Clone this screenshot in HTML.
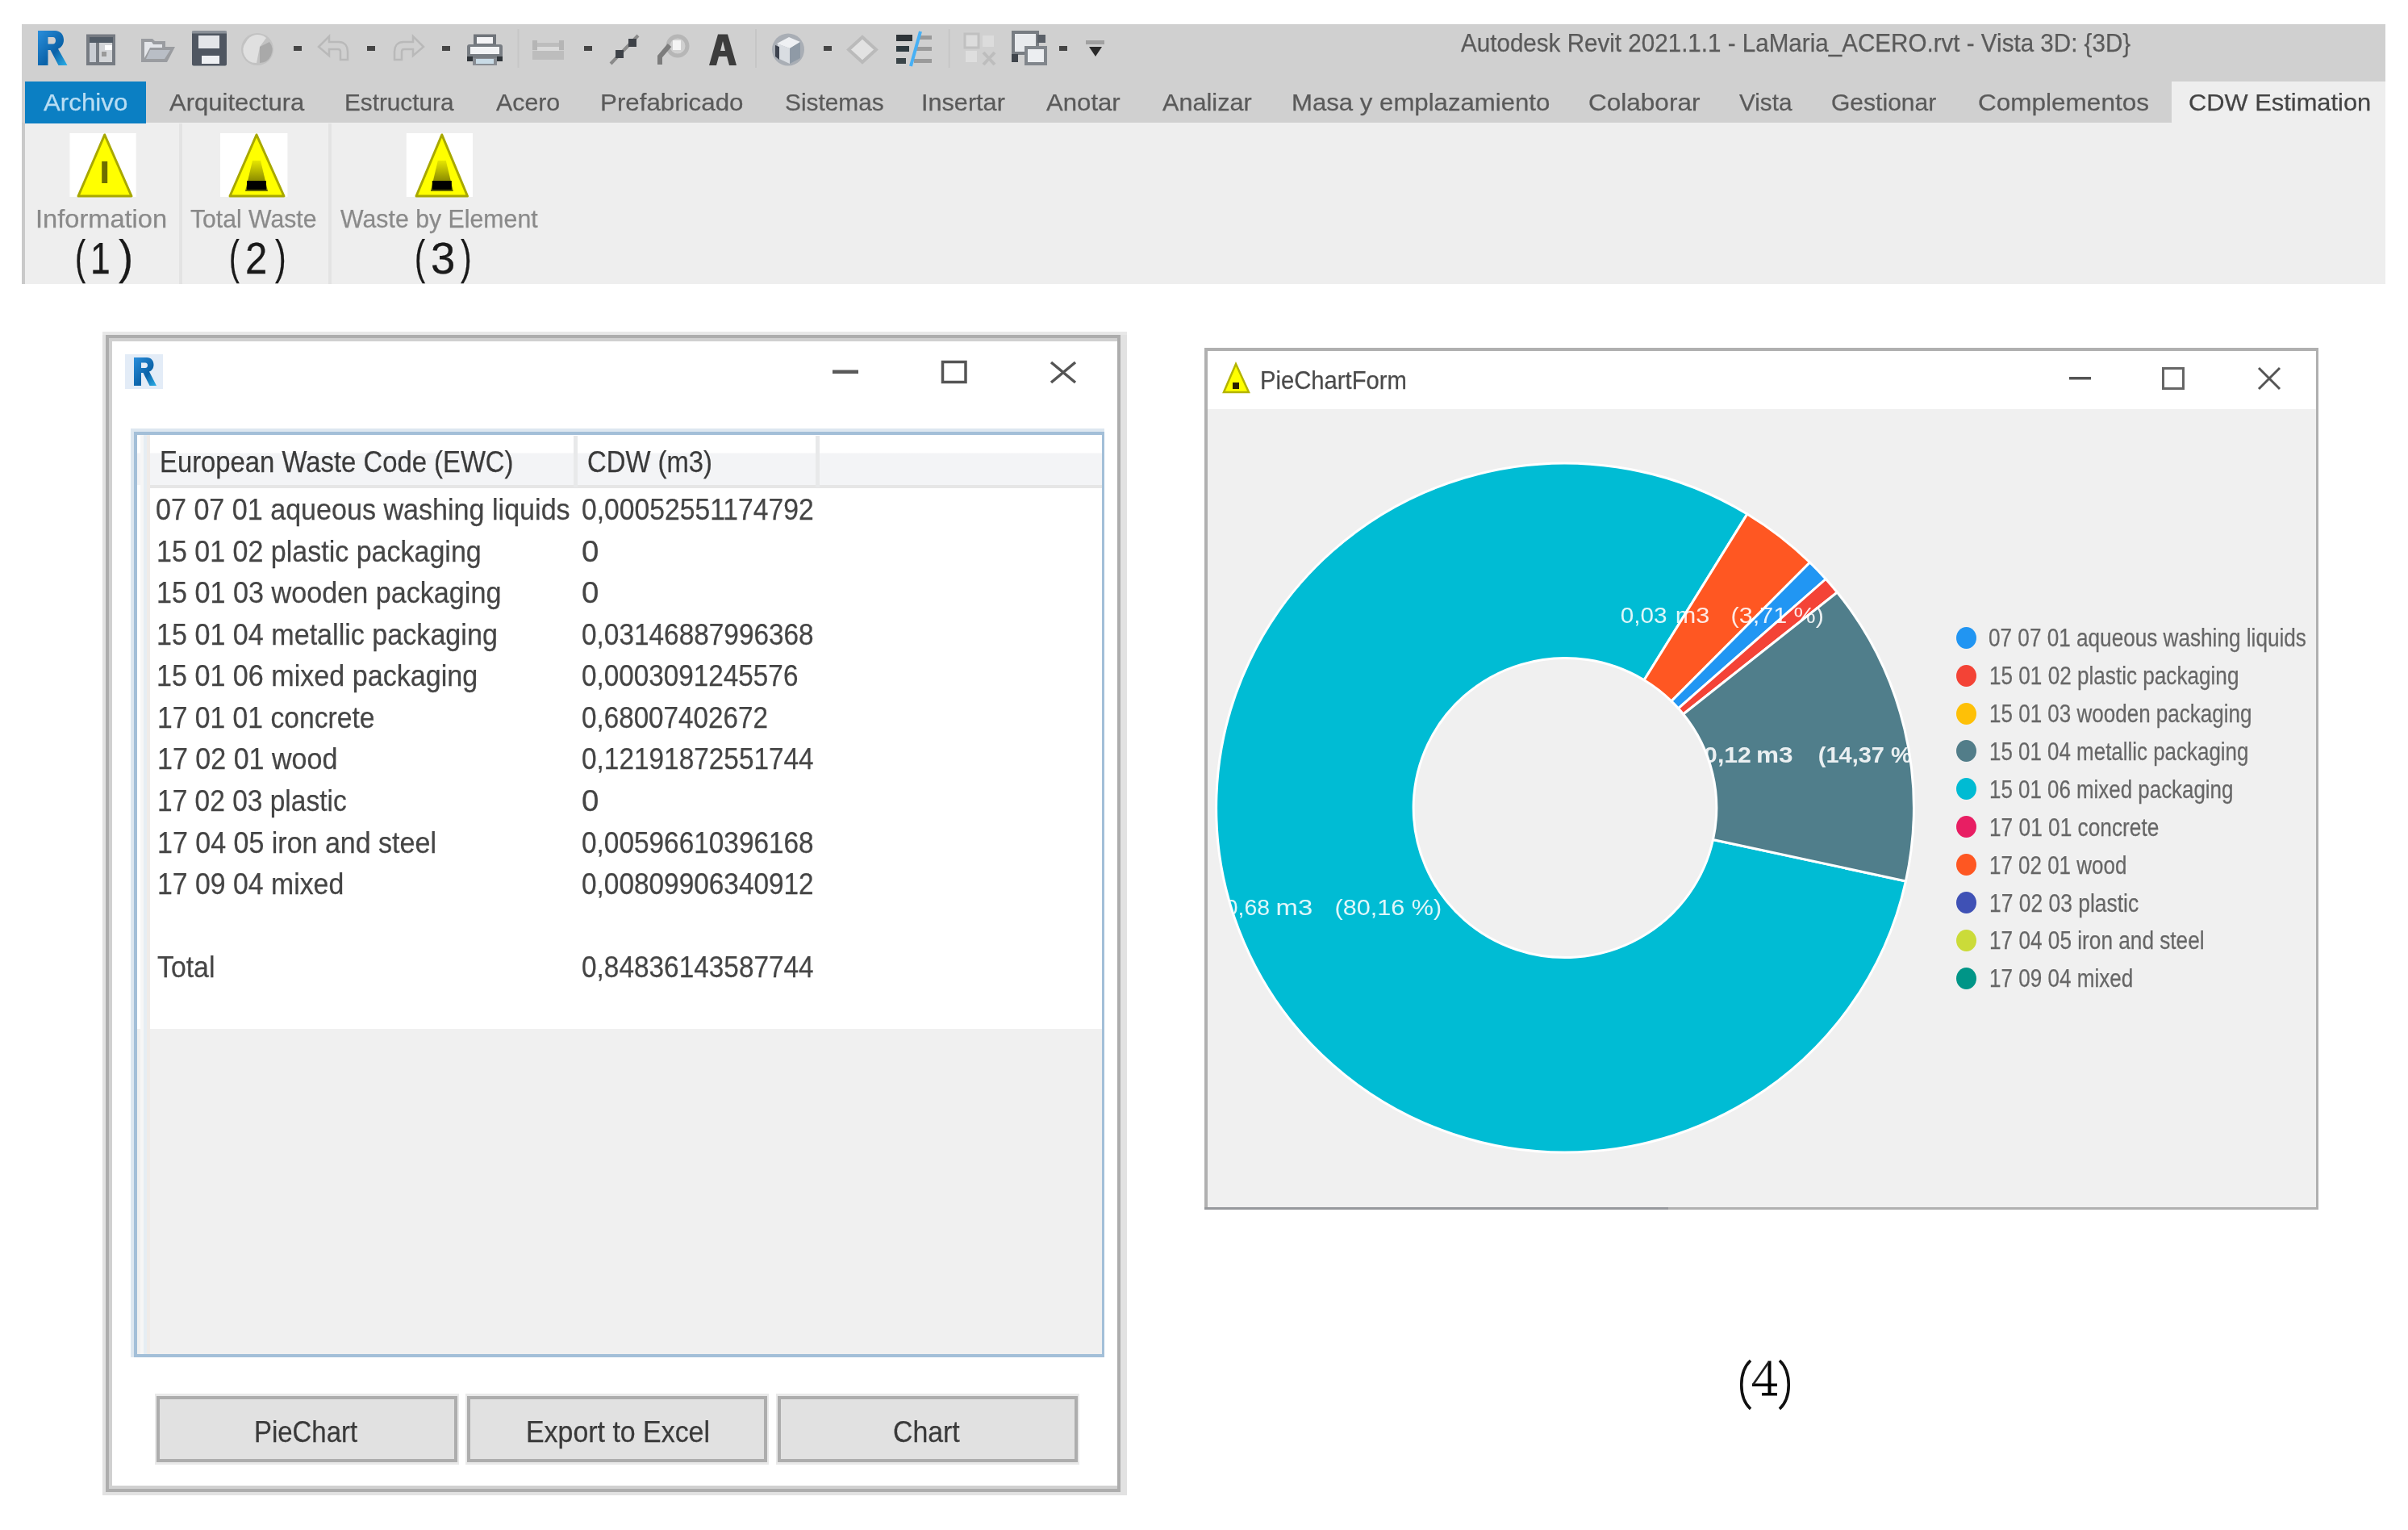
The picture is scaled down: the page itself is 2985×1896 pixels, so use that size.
<!DOCTYPE html>
<html><head><meta charset="utf-8"><style>
html,body{margin:0;padding:0;}
body{width:2985px;height:1896px;position:relative;overflow:hidden;background:#ffffff;font-family:'Liberation Sans',sans-serif;}
.t{position:absolute;white-space:nowrap;line-height:1;transform-origin:0 0;-webkit-text-stroke:0.25px currentColor;}
#wrap{position:absolute;left:0;top:0;width:2985px;height:1896px;filter:blur(0.7px);}
</style></head><body><div id="wrap">
<div style="position:absolute;left:27px;top:30px;width:2930px;height:122px;background:#d0d0d0"></div>
<div style="position:absolute;left:27px;top:152px;width:2930px;height:200px;background:#eeeeee"></div>
<div style="position:absolute;left:2692px;top:101px;width:265px;height:51px;background:#eeeeee"></div>
<div style="position:absolute;left:27px;top:152px;width:4px;height:200px;background:#c9c9c9"></div>
<div style="position:absolute;left:31.4px;top:101.4px;width:149.9px;height:51.19999999999999px;background:#0b7fc3"></div>
<div style="position:absolute;left:222px;top:153px;width:4px;height:198.5px;background:#e3e3e3"></div>
<div style="position:absolute;left:407px;top:153px;width:4px;height:198.5px;background:#e3e3e3"></div>
<div style="position:absolute;left:127px;top:411px;width:1270px;height:1442px;background:#e2e2e2"></div>
<div style="position:absolute;left:127px;top:411px;width:1270px;height:4px;background:#e8e8e8"></div>
<div style="position:absolute;left:131px;top:415px;width:1258px;height:1434px;background:#adadad"></div>
<div style="position:absolute;left:135px;top:419px;width:1250px;height:1426px;background:#d0d0d0"></div>
<div style="position:absolute;left:138.5px;top:423px;width:1246.5px;height:1418px;background:#ffffff"></div>
<div style="position:absolute;left:162px;top:531px;width:1207px;height:1150.5px;background:#dde7f0"></div>
<div style="position:absolute;left:166px;top:535px;width:1203px;height:1146.5px;background:#a3bfd8"></div>
<div style="position:absolute;left:169.5px;top:538.5px;width:1196.2px;height:1139.7px;background:#f0f0f0"></div>
<div style="position:absolute;left:169.5px;top:538.5px;width:1196.2px;height:736.5px;background:#ffffff"></div>
<div style="position:absolute;left:169.5px;top:538.5px;width:1196.2px;height:62.5px;background:linear-gradient(#ffffff 0,#ffffff 22px,#f3f4f6 23px,#f3f4f6 100%)"></div>
<div style="position:absolute;left:186px;top:601px;width:1179.7px;height:4px;background:#e6e6e6"></div>
<div style="position:absolute;left:711px;top:540px;width:5px;height:64px;background:#e8e9ea"></div>
<div style="position:absolute;left:1011px;top:540px;width:5px;height:64px;background:#e8e9ea"></div>
<div style="position:absolute;left:174px;top:538.5px;width:4px;height:1139.7px;background:#f6f6f6"></div>
<div style="position:absolute;left:178px;top:538.5px;width:4px;height:1139.7px;background:#e6edf3"></div>
<div style="position:absolute;left:182px;top:538.5px;width:4px;height:1139.7px;background:#efebe8"></div>
<div style="position:absolute;left:192px;top:1727px;width:377px;height:88px;background:#e9e9e9"></div>
<div style="position:absolute;left:194px;top:1730px;width:373px;height:82px;background:#adadad"></div>
<div style="position:absolute;left:198px;top:1734px;width:365px;height:74px;background:#e1e1e1"></div>
<div style="position:absolute;left:577px;top:1727px;width:376px;height:88px;background:#e9e9e9"></div>
<div style="position:absolute;left:579px;top:1730px;width:372px;height:82px;background:#adadad"></div>
<div style="position:absolute;left:583px;top:1734px;width:364px;height:74px;background:#e1e1e1"></div>
<div style="position:absolute;left:962px;top:1727px;width:376px;height:88px;background:#e9e9e9"></div>
<div style="position:absolute;left:964px;top:1730px;width:372px;height:82px;background:#adadad"></div>
<div style="position:absolute;left:968px;top:1734px;width:364px;height:74px;background:#e1e1e1"></div>
<div style="position:absolute;left:1493px;top:431px;width:1381px;height:1068px;background:#b0b0b0"></div>
<div style="position:absolute;left:1493px;top:1495.5px;width:575px;height:3.5px;background:#96989c"></div>
<div style="position:absolute;left:1496.5px;top:435px;width:1374.0px;height:1060.5px;background:#f0f0f0"></div>
<div style="position:absolute;left:1496.5px;top:435px;width:1374.0px;height:71.5px;background:#ffffff"></div>
<div style="position:absolute;left:2425.2px;top:776.7px;width:25px;height:27px;border-radius:50%;background:#2195f2"></div>
<div style="position:absolute;left:2425.2px;top:823.6px;width:25px;height:27px;border-radius:50%;background:#f34336"></div>
<div style="position:absolute;left:2425.2px;top:870.5px;width:25px;height:27px;border-radius:50%;background:#fec007"></div>
<div style="position:absolute;left:2425.2px;top:917.4000000000001px;width:25px;height:27px;border-radius:50%;background:#527d89"></div>
<div style="position:absolute;left:2425.2px;top:964.3000000000001px;width:25px;height:27px;border-radius:50%;background:#00bbd3"></div>
<div style="position:absolute;left:2425.2px;top:1011.2px;width:25px;height:27px;border-radius:50%;background:#e81e63"></div>
<div style="position:absolute;left:2425.2px;top:1058.1px;width:25px;height:27px;border-radius:50%;background:#fe5722"></div>
<div style="position:absolute;left:2425.2px;top:1105.0px;width:25px;height:27px;border-radius:50%;background:#3f51b5"></div>
<div style="position:absolute;left:2425.2px;top:1151.9px;width:25px;height:27px;border-radius:50%;background:#cbdb39"></div>
<div style="position:absolute;left:2425.2px;top:1198.8px;width:25px;height:27px;border-radius:50%;background:#009587"></div>
<svg style="position:absolute;left:0;top:0" width="2985" height="1896" viewBox="0 0 2985 1896">
<defs>
<linearGradient id="rg" x1="0" y1="0" x2="1" y2="1"><stop offset="0" stop-color="#2a8fdc"/><stop offset="0.6" stop-color="#0a62a8"/><stop offset="1" stop-color="#2cb0e8"/></linearGradient>
<linearGradient id="wg" x1="0" y1="0" x2="0" y2="1"><stop offset="0" stop-color="#e6e600"/><stop offset="1" stop-color="#5e5e00"/></linearGradient>
<clipPath id="ring"><path clip-rule="evenodd" d="M1940,1001 m-426,0 a426,426 0 1 0 852,0 a426,426 0 1 0 -852,0 Z M1940,1001 m-186.5,0 a186.5,186.5 0 1 0 373.0,0 a186.5,186.5 0 1 0 -373.0,0 Z"/></clipPath>
</defs>
<path fill-rule="evenodd" d="M47,38 H68 C75,38 79,43 79,49.5 C79,55 76,59 72,60.5 L83.5,81 H72.5 L62.5,62 H59.5 V81 H47 Z M59.5,46 V54.5 H65.5 C68,54.5 69,52.5 69,50.25 C69,48 68,46 65.5,46 Z" fill="url(#rg)"/>
<rect x="107" y="42.5" width="36" height="38.5" fill="#767b82"/><rect x="111" y="46" width="29" height="7" fill="#535d68"/><rect x="111" y="53" width="8" height="24" fill="#c9cdd3"/><rect x="123" y="53" width="16" height="24" fill="#d3d5d8"/><rect x="130" y="56" width="9" height="6" fill="#ffffff"/><rect x="126" y="64" width="6" height="6" fill="#9a9a9a"/>
<path d="M175,48 H189 L192,51 H205 V58 H217 L207,77 H175 Z" fill="#9a9ca0"/><path d="M179,52 H188 L190,55 H201 V59 H186 L179,72 Z" fill="#e4e6ea"/><path d="M186,62 H211 L204,73 H181 Z" fill="#b9bec6"/>
<rect x="238" y="38.5" width="43" height="43" rx="2" fill="#4f5661"/><rect x="246" y="44" width="26" height="16" fill="#e3e5e9"/><rect x="250" y="69" width="22" height="10" fill="#eef0f3"/><rect x="238" y="38.5" width="43" height="3" fill="#8a9098"/>
<circle cx="319" cy="61" r="20" fill="#c2c2c2"/><path d="M305,52 A16,16 0 0 1 330,47 L322,58 L318,78 A16,16 0 0 1 305,52 Z" fill="#e0e0e0"/><path d="M322,58 L334,52 A16,16 0 0 1 322,78 Z" fill="#a9a9a9"/>
<rect x="364" y="57" width="10" height="6" fill="#454545"/>
<rect x="455" y="57" width="10" height="6" fill="#454545"/>
<rect x="548" y="57" width="10" height="6" fill="#454545"/>
<rect x="724" y="57" width="10" height="6" fill="#454545"/>
<rect x="1021" y="57" width="10" height="6" fill="#454545"/>
<rect x="1313" y="57" width="10" height="6" fill="#454545"/>
<path d="M395,58 L408,45 V52 H420 C428,52 431,58 431,64 V74 H422 V64 C422,62 421,61 419,61 H408 V69 Z" fill="#d0d0d0" stroke="#b9b9b9" stroke-width="2.5"/>
<path d="M525,58 L512,45 V52 H500 C492,52 489,58 489,64 V74 H498 V64 C498,62 499,61 501,61 H512 V69 Z" fill="#d0d0d0" stroke="#b9b9b9" stroke-width="2.5"/>
<rect x="587" y="42.5" width="28" height="14" fill="#70757b"/><rect x="591" y="46" width="20" height="8" fill="#f4f4f6"/><rect x="579" y="55" width="44" height="19" rx="3" fill="#787d83"/><rect x="583" y="58" width="36" height="9" fill="#f2f3f5"/><rect x="579" y="70" width="7" height="6" fill="#30353a"/><rect x="616" y="70" width="7" height="6" fill="#30353a"/><rect x="586" y="72" width="30" height="9" fill="#888c92"/><rect x="590" y="73" width="22" height="6" fill="#c9dbe6"/>
<rect x="641.5" y="36" width="2" height="48" fill="#c6c6c6"/>
<rect x="936" y="36" width="2" height="48" fill="#c6c6c6"/>
<rect x="1175.7" y="36" width="2" height="48" fill="#c6c6c6"/>
<rect x="660" y="63" width="39" height="11" fill="#bdbdbd"/><rect x="665" y="53" width="29" height="5" fill="#bdbdbd"/><rect x="660" y="50" width="6" height="12" fill="#b5b5b5"/><rect x="693" y="50" width="6" height="12" fill="#b5b5b5"/><rect x="666" y="58" width="27" height="5" fill="#dadada"/>
<path d="M757,79 L791,44" stroke="#8a8a8a" stroke-width="4"/><rect x="763" y="62" width="10" height="10" fill="#3e4248"/><rect x="779" y="48" width="10" height="10" fill="#3e4248"/>
<circle cx="840" cy="57" r="12" fill="none" stroke="#b6b6b6" stroke-width="5"/><rect x="834" y="50" width="10" height="12" fill="#f4f4f4"/><path d="M818,80 V70 L830,56" stroke="#7c7c7c" stroke-width="6" fill="none"/>
<path d="M890,42.5 H902 L913,81 H904 L901,70 H891 L888,81 H879 Z M893,63 H899 L896,51 Z" fill="#3c3c3c"/>
<circle cx="977" cy="61.5" r="20" fill="#a9aeb5"/><path d="M963,54 L978,46 L992,52 L979,60 Z" fill="#eef0f3"/><path d="M979,60 L992,52 V72 L979,79 Z" fill="#8f9aa6"/><path d="M979,60 L979,79 L964,72 V54 Z" fill="#d9dde2"/><path d="M961,56 L966,58 V74 L961,70 Z" fill="#3e4450"/>
<path d="M1069,46 L1086,61.5 L1069,77 L1052,61.5 Z" fill="#e2e2e2" stroke="#bababa" stroke-width="4"/>
<rect x="1111" y="43" width="20" height="8" fill="#2e3438"/><rect x="1111" y="57" width="16" height="7" fill="#2e3a40"/><rect x="1111" y="72" width="12" height="7" fill="#3a4448"/><rect x="1138" y="44" width="17" height="5" fill="#9a9a9a"/><rect x="1136" y="58" width="19" height="5" fill="#9a9a9a"/><rect x="1133" y="73" width="22" height="5" fill="#9a9a9a"/><path d="M1129,82 L1141,39" stroke="#47b0f5" stroke-width="4"/>
<rect x="1196" y="42" width="17" height="17" fill="#dcdcdc" stroke="#c0c0c0" stroke-width="3"/><rect x="1218" y="44" width="14" height="14" fill="#dcdcdc"/><rect x="1197" y="63" width="14" height="14" fill="#dedede"/><path d="M1219,65 L1233,80 M1233,65 L1219,80" stroke="#bdbdbd" stroke-width="4"/>
<rect x="1256" y="40" width="30" height="26" fill="#e8eaed" stroke="#777c82" stroke-width="4"/><rect x="1286" y="43" width="10" height="10" fill="#5a6068"/><rect x="1272" y="59" width="24" height="20" fill="#eceef1" stroke="#81868c" stroke-width="4"/><rect x="1254" y="67" width="8" height="10" fill="#40454c"/>
<rect x="1346" y="50" width="23" height="5" fill="#a0a0a0"/><path d="M1350,58 H1366 L1358,70 Z" fill="#2a2a2a"/>
<rect x="86.5" y="165" width="82.19999999999999" height="79" fill="#ffffff"/><path d="M129.7,167 L163,243 L97,243 Z" fill="#ffff00" stroke="#a8a800" stroke-width="3" stroke-linejoin="round"/><rect x="126.19999999999999" y="200" width="7" height="27" fill="#6e6e00"/>
<rect x="273" y="165" width="83.39999999999998" height="79" fill="#ffffff"/><path d="M318,167 L352,243 L285,243 Z" fill="#ffff00" stroke="#a8a800" stroke-width="3" stroke-linejoin="round"/><path d="M313,199 L323,199 L332,237 L304,237 Z" fill="url(#wg)"/><rect x="306" y="224" width="24" height="11" fill="#000000"/>
<rect x="503.8" y="165" width="82.19999999999999" height="79" fill="#ffffff"/><path d="M547.8,167 L579.5,243 L516,243 Z" fill="#ffff00" stroke="#a8a800" stroke-width="3" stroke-linejoin="round"/><path d="M542.8,199 L552.8,199 L561.8,237 L533.8,237 Z" fill="url(#wg)"/><rect x="535.8" y="224" width="24" height="11" fill="#000000"/>
<rect x="155" y="439" width="47" height="43" fill="#e3ecf7"/>
<path fill-rule="evenodd" d="M166,443 H182 C187.5,443 190.5,447 190.5,452 C190.5,456.5 188,459.5 185,460.5 L194,478 H185.5 L177.5,462 H175 V478 H166 Z M175,449.5 V456 H180 C182,456 183,454.5 183,452.75 C183,451 182,449.5 180,449.5 Z" fill="url(#rg)"/>
<rect x="1032" y="458.5" width="32" height="4.5" fill="#5a5a5a"/>
<rect x="1168.5" y="448.5" width="28.5" height="25" fill="none" stroke="#555" stroke-width="3.5"/>
<path d="M1303,449 L1333,474 M1333,449 L1303,474" stroke="#555" stroke-width="3.5"/>
<path d="M1532,451 L1548,486 H1517 Z" fill="#ffff00" stroke="#b4b400" stroke-width="2.5"/><rect x="1528" y="474" width="8" height="8" fill="#2a2200"/>
<rect x="2565" y="467" width="27" height="3.5" fill="#555"/>
<rect x="2681.5" y="456.5" width="25" height="25" fill="none" stroke="#666" stroke-width="3"/>
<path d="M2800,456 L2826,482 M2826,456 L2800,482" stroke="#555" stroke-width="3"/>
<g transform="translate(1940,1001) scale(1.0125,1) translate(-1940,-1001)">
<path d="M2357.20,1091.96 A427,427 0 1 1 2163.11,636.92 L2036.92,842.84 A185.5,185.5 0 1 0 2121.24,1040.52 Z" fill="#00bcd4" stroke="#ffffff" stroke-width="3" stroke-linejoin="miter"/>
<path d="M2163.11,636.92 A427,427 0 0 1 2239.82,696.96 L2070.25,868.92 A185.5,185.5 0 0 0 2036.92,842.84 Z" fill="#ff5722" stroke="#ffffff" stroke-width="3" stroke-linejoin="miter"/>
<path d="M2239.82,696.96 A427,427 0 0 1 2259.31,717.50 L2078.72,877.84 A185.5,185.5 0 0 0 2070.25,868.92 Z" fill="#2196f3" stroke="#ffffff" stroke-width="3" stroke-linejoin="miter"/>
<path d="M2259.31,717.50 A427,427 0 0 1 2273.24,734.02 L2084.77,885.02 A185.5,185.5 0 0 0 2078.72,877.84 Z" fill="#f44336" stroke="#ffffff" stroke-width="3" stroke-linejoin="miter"/>
<path d="M2273.24,734.02 A427,427 0 0 1 2357.20,1091.96 L2121.24,1040.52 A185.5,185.5 0 0 0 2084.77,885.02 Z" fill="#507e8b" stroke="#ffffff" stroke-width="3" stroke-linejoin="miter"/>
<g clip-path="url(#ring)" font-family="Liberation Sans, sans-serif" fill="#ffffff" fill-opacity="0.88"><text x="2008" y="772" font-size="27" font-weight="normal" textLength="57" lengthAdjust="spacingAndGlyphs">0,03</text><text x="2075" y="772" font-size="27" font-weight="normal" textLength="42" lengthAdjust="spacingAndGlyphs">m3</text><text x="2143" y="772" font-size="27" font-weight="normal" textLength="114" lengthAdjust="spacingAndGlyphs">(3,71 %)</text><text x="2110" y="945" font-size="28.5" font-weight="bold" textLength="58" lengthAdjust="spacingAndGlyphs">0,12</text><text x="2174" y="945" font-size="28.5" font-weight="bold" textLength="45" lengthAdjust="spacingAndGlyphs">m3</text><text x="2250" y="945" font-size="28.5" font-weight="bold" textLength="124" lengthAdjust="spacingAndGlyphs">(14,37 %)</text><text x="1524" y="1134" font-size="28" font-weight="normal" textLength="54.5" lengthAdjust="spacingAndGlyphs">0,68</text><text x="1586" y="1134" font-size="28" font-weight="normal" textLength="45" lengthAdjust="spacingAndGlyphs">m3</text><text x="1658" y="1134" font-size="28" font-weight="normal" textLength="131" lengthAdjust="spacingAndGlyphs">(80,16 %)</text></g></g>
<path d="M2170,1686 C2155,1700 2155,1732 2170,1746" stroke="#111" stroke-width="3.6" fill="none"/><path d="M2206,1686 C2221,1700 2221,1732 2206,1746" stroke="#111" stroke-width="3.6" fill="none"/><rect x="2191.5" y="1686.5" width="4" height="41" fill="#000"/><rect x="2172" y="1714.5" width="31" height="3.5" fill="#000"/><path d="M2173,1716 L2192.5,1688" stroke="#222" stroke-width="2.6"/><rect x="2184" y="1726" width="19" height="3.5" fill="#000"/>
</svg>
<div class="t" style="left:54.00px;top:112.20px;font-size:29.3px;color:#b8ddf3;font-family:'Liberation Sans', sans-serif;font-weight:normal;transform:scaleX(1.0678);">Archivo</div>
<div class="t" style="left:210.00px;top:112.20px;font-size:29.3px;color:#5a5a5a;font-family:'Liberation Sans', sans-serif;font-weight:normal;transform:scaleX(1.0588);">Arquitectura</div>
<div class="t" style="left:426.57px;top:112.20px;font-size:29.3px;color:#5a5a5a;font-family:'Liberation Sans', sans-serif;font-weight:normal;transform:scaleX(1.0142);">Estructura</div>
<div class="t" style="left:614.60px;top:112.20px;font-size:29.3px;color:#5a5a5a;font-family:'Liberation Sans', sans-serif;font-weight:normal;transform:scaleX(1.0349);">Acero</div>
<div class="t" style="left:743.86px;top:112.20px;font-size:29.3px;color:#5a5a5a;font-family:'Liberation Sans', sans-serif;font-weight:normal;transform:scaleX(1.0683);">Prefabricado</div>
<div class="t" style="left:972.98px;top:112.20px;font-size:29.3px;color:#5a5a5a;font-family:'Liberation Sans', sans-serif;font-weight:normal;transform:scaleX(1.0183);">Sistemas</div>
<div class="t" style="left:1141.91px;top:112.20px;font-size:29.3px;color:#5a5a5a;font-family:'Liberation Sans', sans-serif;font-weight:normal;transform:scaleX(1.0455);">Insertar</div>
<div class="t" style="left:1297.00px;top:112.20px;font-size:29.3px;color:#5a5a5a;font-family:'Liberation Sans', sans-serif;font-weight:normal;transform:scaleX(1.0628);">Anotar</div>
<div class="t" style="left:1441.00px;top:112.20px;font-size:29.3px;color:#5a5a5a;font-family:'Liberation Sans', sans-serif;font-weight:normal;transform:scaleX(1.0463);">Analizar</div>
<div class="t" style="left:1600.57px;top:112.20px;font-size:29.3px;color:#5a5a5a;font-family:'Liberation Sans', sans-serif;font-weight:normal;transform:scaleX(1.0634);">Masa y emplazamiento</div>
<div class="t" style="left:1968.92px;top:112.20px;font-size:29.3px;color:#5a5a5a;font-family:'Liberation Sans', sans-serif;font-weight:normal;transform:scaleX(1.0759);">Colaborar</div>
<div class="t" style="left:2155.80px;top:112.20px;font-size:29.3px;color:#5a5a5a;font-family:'Liberation Sans', sans-serif;font-weight:normal;transform:scaleX(1.0137);">Vista</div>
<div class="t" style="left:2270.47px;top:112.20px;font-size:29.3px;color:#5a5a5a;font-family:'Liberation Sans', sans-serif;font-weight:normal;transform:scaleX(1.0257);">Gestionar</div>
<div class="t" style="left:2452.42px;top:112.20px;font-size:29.3px;color:#5a5a5a;font-family:'Liberation Sans', sans-serif;font-weight:normal;transform:scaleX(1.0759);">Complementos</div>
<div class="t" style="left:2712.95px;top:112.20px;font-size:29.3px;color:#444;font-family:'Liberation Sans', sans-serif;font-weight:normal;transform:scaleX(1.0528);">CDW Estimation</div>
<div class="t" style="left:1810.80px;top:38.40px;font-size:31.3px;color:#5a5a5a;font-family:'Liberation Sans', sans-serif;font-weight:normal;transform:scaleX(0.9457);">Autodesk Revit 2021.1.1 - LaMaria_ACERO.rvt - Vista 3D: {3D}</div>
<div class="t" style="left:44.42px;top:256.42px;font-size:31.4px;color:#8a8a8a;font-family:'Liberation Sans', sans-serif;font-weight:normal;transform:scaleX(1.0386);">Information</div>
<div class="t" style="left:236.00px;top:256.42px;font-size:31.4px;color:#8a8a8a;font-family:'Liberation Sans', sans-serif;font-weight:normal;transform:scaleX(0.9608);">Total Waste</div>
<div class="t" style="left:421.50px;top:256.42px;font-size:31.4px;color:#8a8a8a;font-family:'Liberation Sans', sans-serif;font-weight:normal;transform:scaleX(0.9652);">Waste by Element</div>
<div class="t" style="left:93.17px;top:290.08px;font-size:58.5px;color:#1a1a1a;font-family:'Liberation Sans', sans-serif;font-weight:normal;transform:scaleX(0.6765);">(</div>
<div class="t" style="left:111.77px;top:293.04px;font-size:55px;color:#1a1a1a;font-family:'Liberation Sans', sans-serif;font-weight:normal;transform:scaleX(0.8083);">1</div>
<div class="t" style="left:147.00px;top:290.08px;font-size:58.5px;color:#1a1a1a;font-family:'Liberation Sans', sans-serif;font-weight:normal;transform:scaleX(0.9313);">)</div>
<div class="t" style="left:283.72px;top:290.08px;font-size:58.5px;color:#1a1a1a;font-family:'Liberation Sans', sans-serif;font-weight:normal;transform:scaleX(0.6588);">(</div>
<div class="t" style="left:303.82px;top:293.04px;font-size:55px;color:#1a1a1a;font-family:'Liberation Sans', sans-serif;font-weight:normal;transform:scaleX(0.8923);">2</div>
<div class="t" style="left:341.40px;top:290.08px;font-size:58.5px;color:#1a1a1a;font-family:'Liberation Sans', sans-serif;font-weight:normal;transform:scaleX(0.7000);">)</div>
<div class="t" style="left:514.17px;top:290.08px;font-size:58.5px;color:#1a1a1a;font-family:'Liberation Sans', sans-serif;font-weight:normal;transform:scaleX(0.6765);">(</div>
<div class="t" style="left:534.01px;top:293.04px;font-size:55px;color:#1a1a1a;font-family:'Liberation Sans', sans-serif;font-weight:normal;transform:scaleX(0.9926);">3</div>
<div class="t" style="left:571.40px;top:290.08px;font-size:58.5px;color:#1a1a1a;font-family:'Liberation Sans', sans-serif;font-weight:normal;transform:scaleX(0.7000);">)</div>
<div class="t" style="left:198.19px;top:554.57px;font-size:36.3px;color:#3a3a3a;font-family:'Liberation Sans', sans-serif;font-weight:normal;transform:scaleX(0.9045);">European Waste Code (EWC)</div>
<div class="t" style="left:727.60px;top:554.57px;font-size:36.3px;color:#3a3a3a;font-family:'Liberation Sans', sans-serif;font-weight:normal;transform:scaleX(0.9039);">CDW (m3)</div>
<div class="t" style="left:192.99px;top:613.07px;font-size:37.6px;color:#454545;font-family:'Liberation Sans', sans-serif;font-weight:normal;transform:scaleX(0.9072);">07 07 01 aqueous washing liquids</div>
<div class="t" style="left:721.40px;top:613.07px;font-size:37.6px;color:#454545;font-family:'Liberation Sans', sans-serif;font-weight:normal;transform:scaleX(0.8959);">0,00052551174792</div>
<div class="t" style="left:193.89px;top:664.64px;font-size:37.6px;color:#454545;font-family:'Liberation Sans', sans-serif;font-weight:normal;transform:scaleX(0.9050);">15 01 02 plastic packaging</div>
<div class="t" style="left:721.28px;top:664.64px;font-size:37.6px;color:#454545;font-family:'Liberation Sans', sans-serif;font-weight:normal;transform:scaleX(1.0211);">0</div>
<div class="t" style="left:193.88px;top:716.21px;font-size:37.6px;color:#454545;font-family:'Liberation Sans', sans-serif;font-weight:normal;transform:scaleX(0.9092);">15 01 03 wooden packaging</div>
<div class="t" style="left:721.28px;top:716.21px;font-size:37.6px;color:#454545;font-family:'Liberation Sans', sans-serif;font-weight:normal;transform:scaleX(1.0211);">0</div>
<div class="t" style="left:193.88px;top:767.78px;font-size:37.6px;color:#454545;font-family:'Liberation Sans', sans-serif;font-weight:normal;transform:scaleX(0.9077);">15 01 04 metallic packaging</div>
<div class="t" style="left:721.41px;top:767.78px;font-size:37.6px;color:#454545;font-family:'Liberation Sans', sans-serif;font-weight:normal;transform:scaleX(0.8881);">0,03146887996368</div>
<div class="t" style="left:193.88px;top:819.35px;font-size:37.6px;color:#454545;font-family:'Liberation Sans', sans-serif;font-weight:normal;transform:scaleX(0.9077);">15 01 06 mixed packaging</div>
<div class="t" style="left:721.41px;top:819.35px;font-size:37.6px;color:#454545;font-family:'Liberation Sans', sans-serif;font-weight:normal;transform:scaleX(0.8857);">0,0003091245576</div>
<div class="t" style="left:195.01px;top:870.92px;font-size:37.6px;color:#454545;font-family:'Liberation Sans', sans-serif;font-weight:normal;transform:scaleX(0.8958);">17 01 01 concrete</div>
<div class="t" style="left:721.42px;top:870.92px;font-size:37.6px;color:#454545;font-family:'Liberation Sans', sans-serif;font-weight:normal;transform:scaleX(0.8838);">0,68007402672</div>
<div class="t" style="left:194.99px;top:922.49px;font-size:37.6px;color:#454545;font-family:'Liberation Sans', sans-serif;font-weight:normal;transform:scaleX(0.9058);">17 02 01 wood</div>
<div class="t" style="left:721.41px;top:922.49px;font-size:37.6px;color:#454545;font-family:'Liberation Sans', sans-serif;font-weight:normal;transform:scaleX(0.8881);">0,12191872551744</div>
<div class="t" style="left:195.02px;top:974.06px;font-size:37.6px;color:#454545;font-family:'Liberation Sans', sans-serif;font-weight:normal;transform:scaleX(0.8916);">17 02 03 plastic</div>
<div class="t" style="left:721.28px;top:974.06px;font-size:37.6px;color:#454545;font-family:'Liberation Sans', sans-serif;font-weight:normal;transform:scaleX(1.0211);">0</div>
<div class="t" style="left:194.99px;top:1025.63px;font-size:37.6px;color:#454545;font-family:'Liberation Sans', sans-serif;font-weight:normal;transform:scaleX(0.9048);">17 04 05 iron and steel</div>
<div class="t" style="left:721.41px;top:1025.63px;font-size:37.6px;color:#454545;font-family:'Liberation Sans', sans-serif;font-weight:normal;transform:scaleX(0.8881);">0,00596610396168</div>
<div class="t" style="left:195.00px;top:1077.20px;font-size:37.6px;color:#454545;font-family:'Liberation Sans', sans-serif;font-weight:normal;transform:scaleX(0.8998);">17 09 04 mixed</div>
<div class="t" style="left:721.41px;top:1077.20px;font-size:37.6px;color:#454545;font-family:'Liberation Sans', sans-serif;font-weight:normal;transform:scaleX(0.8881);">0,00809906340912</div>
<div class="t" style="left:194.60px;top:1180.34px;font-size:37.6px;color:#454545;font-family:'Liberation Sans', sans-serif;font-weight:normal;transform:scaleX(0.9000);">Total</div>
<div class="t" style="left:721.41px;top:1180.34px;font-size:37.6px;color:#454545;font-family:'Liberation Sans', sans-serif;font-weight:normal;transform:scaleX(0.8881);">0,84836143587744</div>
<div class="t" style="left:315.33px;top:1756.48px;font-size:37px;color:#3a3a3a;font-family:'Liberation Sans', sans-serif;font-weight:normal;transform:scaleX(0.8894);">PieChart</div>
<div class="t" style="left:651.75px;top:1756.48px;font-size:37px;color:#3a3a3a;font-family:'Liberation Sans', sans-serif;font-weight:normal;transform:scaleX(0.9162);">Export to Excel</div>
<div class="t" style="left:1106.69px;top:1756.48px;font-size:37px;color:#3a3a3a;font-family:'Liberation Sans', sans-serif;font-weight:normal;transform:scaleX(0.9136);">Chart</div>
<div class="t" style="left:1562.17px;top:455.21px;font-size:32px;color:#4a4a4a;font-family:'Liberation Sans', sans-serif;font-weight:normal;transform:scaleX(0.9130);">PieChartForm</div>
<div class="t" style="left:2464.56px;top:775.26px;font-size:31px;color:#666666;font-family:'Liberation Sans', sans-serif;font-weight:normal;transform:scaleX(0.8433);">07 07 01 aqueous washing liquids</div>
<div class="t" style="left:2466.31px;top:822.16px;font-size:31px;color:#666666;font-family:'Liberation Sans', sans-serif;font-weight:normal;transform:scaleX(0.8429);">15 01 02 plastic packaging</div>
<div class="t" style="left:2466.32px;top:869.06px;font-size:31px;color:#666666;font-family:'Liberation Sans', sans-serif;font-weight:normal;transform:scaleX(0.8391);">15 01 03 wooden packaging</div>
<div class="t" style="left:2466.33px;top:915.96px;font-size:31px;color:#666666;font-family:'Liberation Sans', sans-serif;font-weight:normal;transform:scaleX(0.8363);">15 01 04 metallic packaging</div>
<div class="t" style="left:2466.33px;top:962.86px;font-size:31px;color:#666666;font-family:'Liberation Sans', sans-serif;font-weight:normal;transform:scaleX(0.8356);">15 01 06 mixed packaging</div>
<div class="t" style="left:2466.30px;top:1009.76px;font-size:31px;color:#666666;font-family:'Liberation Sans', sans-serif;font-weight:normal;transform:scaleX(0.8476);">17 01 01 concrete</div>
<div class="t" style="left:2466.33px;top:1056.66px;font-size:31px;color:#666666;font-family:'Liberation Sans', sans-serif;font-weight:normal;transform:scaleX(0.8374);">17 02 01 wood</div>
<div class="t" style="left:2466.29px;top:1103.56px;font-size:31px;color:#666666;font-family:'Liberation Sans', sans-serif;font-weight:normal;transform:scaleX(0.8525);">17 02 03 plastic</div>
<div class="t" style="left:2466.31px;top:1150.46px;font-size:31px;color:#666666;font-family:'Liberation Sans', sans-serif;font-weight:normal;transform:scaleX(0.8452);">17 04 05 iron and steel</div>
<div class="t" style="left:2466.32px;top:1197.36px;font-size:31px;color:#666666;font-family:'Liberation Sans', sans-serif;font-weight:normal;transform:scaleX(0.8408);">17 09 04 mixed</div>
</div></body></html>
